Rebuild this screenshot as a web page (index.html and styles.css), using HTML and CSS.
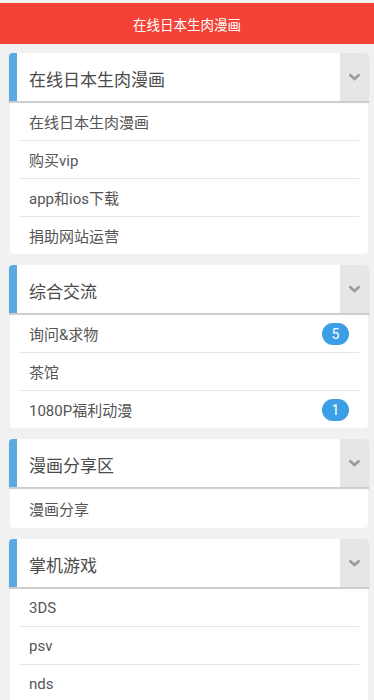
FILE: index.html
```html
<!DOCTYPE html>
<html lang="zh">
<head>
<meta charset="utf-8">
<link rel="stylesheet" href="styles.css">
</head>
<body>
<div class="topbar">在线日本生肉漫画</div>
<div class="page">
  <section class="group">
    <div class="head"><span class="title">在线日本生肉漫画</span><span class="toggle"><svg width="13" height="8" viewBox="0 0 13 8"><path d="M1.5 1.5 L6.5 6 L11.5 1.5" fill="none" stroke="#9a9a9a" stroke-width="2.5"/></svg></span></div>
    <ul class="list">
      <li class="item">在线日本生肉漫画</li>
      <li class="item">购买vip</li>
      <li class="item">app和ios下载</li>
      <li class="item">捐助网站运营</li>
    </ul>
  </section>
  <section class="group">
    <div class="head"><span class="title">综合交流</span><span class="toggle"><svg width="13" height="8" viewBox="0 0 13 8"><path d="M1.5 1.5 L6.5 6 L11.5 1.5" fill="none" stroke="#9a9a9a" stroke-width="2.5"/></svg></span></div>
    <ul class="list">
      <li class="item">询问&amp;求物<span class="badge">5</span></li>
      <li class="item">茶馆</li>
      <li class="item">1080P福利动漫<span class="badge">1</span></li>
    </ul>
  </section>
  <section class="group">
    <div class="head"><span class="title">漫画分享区</span><span class="toggle"><svg width="13" height="8" viewBox="0 0 13 8"><path d="M1.5 1.5 L6.5 6 L11.5 1.5" fill="none" stroke="#9a9a9a" stroke-width="2.5"/></svg></span></div>
    <ul class="list">
      <li class="item">漫画分享</li>
    </ul>
  </section>
  <section class="group">
    <div class="head"><span class="title">掌机游戏</span><span class="toggle"><svg width="13" height="8" viewBox="0 0 13 8"><path d="M1.5 1.5 L6.5 6 L11.5 1.5" fill="none" stroke="#9a9a9a" stroke-width="2.5"/></svg></span></div>
    <ul class="list">
      <li class="item">3DS</li>
      <li class="item">psv</li>
      <li class="item">nds</li>
    </ul>
  </section>
</div>
</body>
</html>
```
FILE: styles.css
```css
html, body {
  margin: 0;
  padding: 0;
  background: #f1f1f1;
  font-family: Roboto, "Noto Sans CJK SC", sans-serif;
}
.topbar {
  margin-top: 3px;
  height: 41px;
  background: #f44336;
  color: #fff;
  font-size: 13.5px;
  display: flex;
  align-items: center;
  justify-content: center;
}
.page {
  padding: 9px 5px 0 9px;
}
.group {
  margin-bottom: 11px;
}
.head {
  display: flex;
  height: 48px;
  background: #fff;
  border-left: 8px solid #5aa9e0;
  border-radius: 4px 4px 0 0;
  box-shadow: 0 2px 1px rgba(0, 0, 0, 0.2);
  position: relative;
  z-index: 1;
}
.title {
  flex: 1;
  display: flex;
  align-items: center;
  padding-left: 12px;
  padding-top: 2px;
  font-size: 17px;
  color: #4a4a4a;
}
.toggle {
  width: 29px;
  background: #e6e6e6;
  display: flex;
  align-items: center;
  justify-content: center;
  border-radius: 0 4px 0 0;
}
.list {
  list-style: none;
  margin: 0 1px;
  padding: 2px 9px 0 9px;
  background: #fff;
  border-radius: 0 0 4px 4px;
}
.item {
  height: 37px;
  display: flex;
  align-items: center;
  justify-content: space-between;
  padding: 0 10px;
  font-size: 15px;
  color: #555;
  border-bottom: 1px solid #e6e6e6;
}
.item:last-child {
  border-bottom: none;
}
.item:only-child {
  height: 39px;
}
.badge {
  width: 27px;
  height: 22px;
  border-radius: 11px;
  background: #3a9fe4;
  color: #fff;
  font-size: 14px;
  display: flex;
  align-items: center;
  justify-content: center;
}
```
